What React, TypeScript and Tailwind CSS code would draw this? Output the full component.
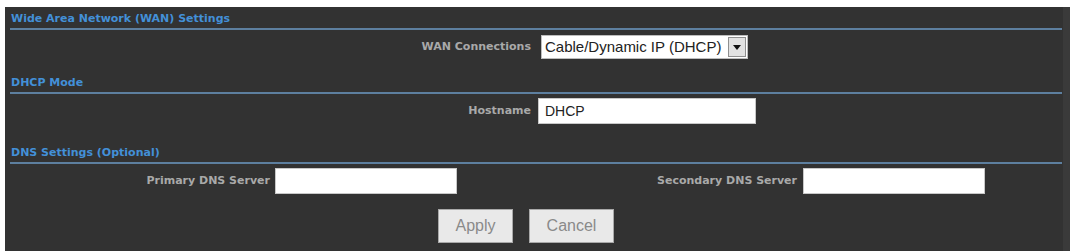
import type { ReactNode } from "react";

const headFont = { fontFamily: '"DejaVu Sans", Verdana, sans-serif' };
const fieldFont = { fontFamily: '"Liberation Sans", Arial, sans-serif' };

function SectionTitle({ children }: { children: ReactNode }) {
  return (
    <div
      className="flex h-[23px] items-end border-b-2 border-[#5d7f9f] pb-[3px] pl-[1px] text-[11px] font-bold leading-[13px] text-[#4390d8]"
      style={headFont}
    >
      {children}
    </div>
  );
}

function Label({ children, className = "" }: { children: ReactNode; className?: string }) {
  return (
    <div
      className={`flex items-center justify-end text-[11px] font-bold text-[#a9a9a9] ${className}`}
      style={headFont}
    >
      {children}
    </div>
  );
}

function TextBox({ value, width }: { value?: string; width: string }) {
  return (
    <input
      defaultValue={value}
      className={`h-[26px] ${width} border border-[#c8c8c8] bg-white px-[6px] text-[14px] text-[#222] outline-none`}
      style={fieldFont}
    />
  );
}

export default function App() {
  return (
    <div className="flex h-[251px] w-[1070px] bg-white pt-[7px] pl-[5px]">
      <div className="flex w-[1058px] flex-col bg-[#323232] pl-[5px] pr-[1px]">
        <SectionTitle>Wide Area Network (WAN) Settings</SectionTitle>

        <div className="grid h-[41px] grid-cols-2 items-start pt-[5px]">
          <Label className="h-[24px] pr-[5px]">WAN Connections</Label>
          <div
            className="ml-[5px] flex h-[24px] w-[207px] border border-[#bdbdbd] bg-white"
            style={fieldFont}
          >
            <span className="flex flex-1 items-center pl-[3px] text-[15px] text-[#222]">
              Cable/Dynamic IP (DHCP)
            </span>
            <span className="m-[1px] flex w-[18px] items-center justify-center border border-[#8f8f8f] bg-[#e2e2e2]">
              <svg width="8" height="5" viewBox="0 0 8 5">
                <path d="M0 0h8L4 5z" fill="#111" />
              </svg>
            </span>
          </div>
        </div>

        <SectionTitle>DHCP Mode</SectionTitle>

        <div className="grid h-[47px] grid-cols-2 items-start pt-[4px]">
          <Label className="h-[26px] pr-[5px]">Hostname</Label>
          <div className="ml-[2px]">
            <TextBox value="DHCP" width="w-[218px]" />
          </div>
        </div>

        <SectionTitle>DNS Settings (Optional)</SectionTitle>

        <div className="grid grid-cols-4 items-start pt-[4px]">
          <Label className="h-[26px] pr-[3px]">Primary DNS Server</Label>
          <div className="ml-[2px]">
            <TextBox width="w-[182px]" />
          </div>
          <Label className="h-[26px] pr-[2px]">Secondary DNS Server</Label>
          <div className="ml-[4px]">
            <TextBox width="w-[182px]" />
          </div>
        </div>

        <div className="mt-[15px] flex justify-center gap-[16px] pr-[20px]" style={fieldFont}>
          <button className="h-[34px] w-[75px] border border-[#a9a9a9] bg-[#e9e9e9] text-[16px] text-[#8a8a8a]">
            Apply
          </button>
          <button className="h-[34px] w-[85px] border border-[#a9a9a9] bg-[#e9e9e9] text-[16px] text-[#8a8a8a]">
            Cancel
          </button>
        </div>
      </div>
      <div className="w-[7px] bg-[#3a3a3a]" />
    </div>
  );
}
